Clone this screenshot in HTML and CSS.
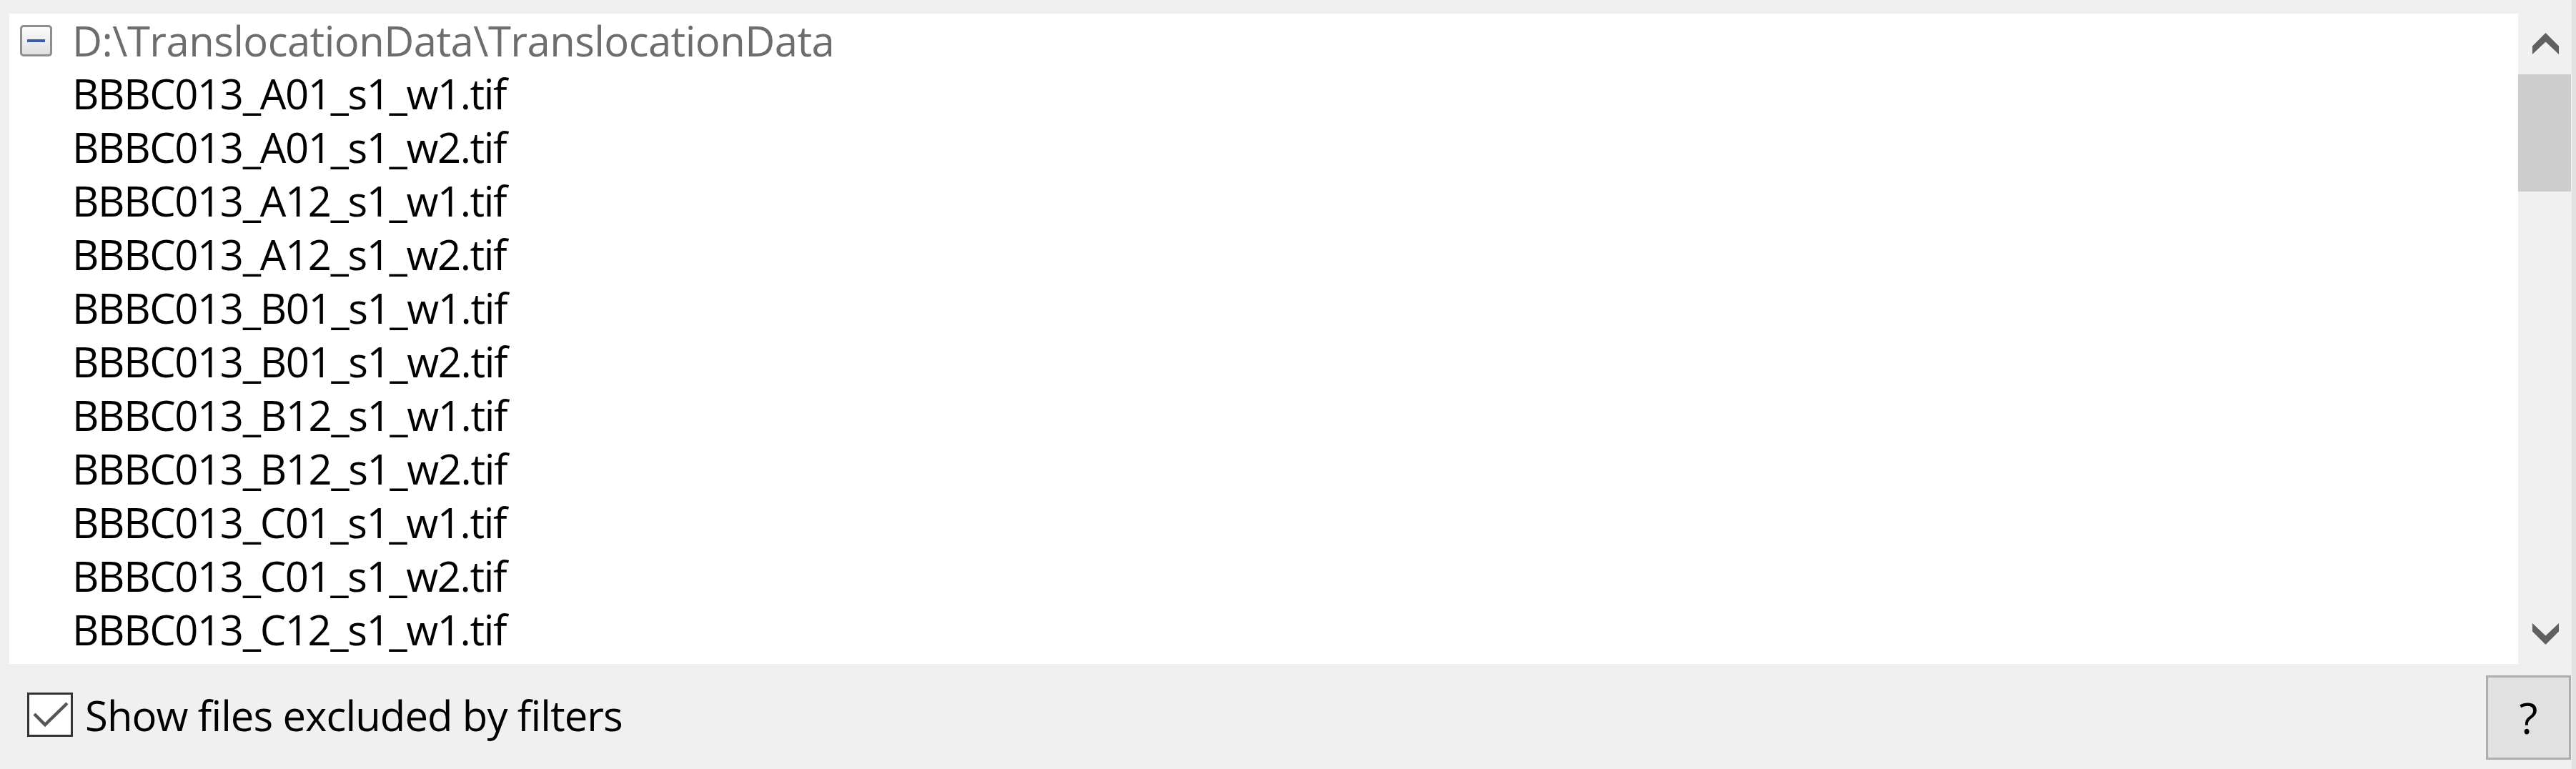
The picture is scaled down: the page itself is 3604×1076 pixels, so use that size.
FILE: index.html
```html
<!DOCTYPE html>
<html lang="en">
<head>
<meta charset="utf-8">
<title>Files</title>
<link rel="stylesheet" href="styles.css">
</head>
<body>
<div class="window">
  <div class="tree-panel">
    <div class="tree">
      <div class="tree-root">
        <span class="expander"><span class="minus"></span></span>
        <span class="root-label">D:\TranslocationData\TranslocationData</span>
      </div>
      <ul class="files">
        <li>BBBC013_A01_s1_w1.tif</li>
        <li>BBBC013_A01_s1_w2.tif</li>
        <li>BBBC013_A12_s1_w1.tif</li>
        <li>BBBC013_A12_s1_w2.tif</li>
        <li>BBBC013_B01_s1_w1.tif</li>
        <li>BBBC013_B01_s1_w2.tif</li>
        <li>BBBC013_B12_s1_w1.tif</li>
        <li>BBBC013_B12_s1_w2.tif</li>
        <li>BBBC013_C01_s1_w1.tif</li>
        <li>BBBC013_C01_s1_w2.tif</li>
        <li>BBBC013_C12_s1_w1.tif</li>
      </ul>
    </div>
    <div class="scrollbar">
      <div class="sb-btn">
        <svg class="sb-arrow" viewBox="0 0 37 31" width="37" height="31"><polygon points="18.5,0 37,18.5 37,30 18.5,12.5 0,30 0,18.5"/></svg>
      </div>
      <div class="sb-track"><div class="sb-thumb"></div></div>
      <div class="sb-btn">
        <svg class="sb-arrow" viewBox="0 0 37 31" width="37" height="31"><polygon points="0,1 18.5,18.5 37,1 37,12.5 18.5,31 0,12.5"/></svg>
      </div>
    </div>
  </div>
  <div class="footer">
    <label class="check">
      <span class="check-box">
        <svg viewBox="0 0 58 56" width="58" height="56"><polyline points="7,27 22,42 53,12"/></svg>
      </span>
      <span class="check-label">Show files excluded by filters</span>
    </label>
    <button class="help" type="button">?</button>
  </div>
</div>
</body>
</html>
```
FILE: styles.css
```css
html, body {
  margin: 0;
  padding: 0;
}
body {
  background: #f0f0f0;
  width: 3604px;
  height: 1076px;
  overflow: hidden;
  font-family: "Open Sans", "Noto Sans", sans-serif;
  font-size: 58px;
  color: #000;
}
.window {
  box-sizing: border-box;
  width: 3604px;
  height: 1076px;
  padding: 19px 0 0 13px;
  border-right: 6px solid #e2e2e2;
  display: flex;
  flex-direction: column;
}
.tree-panel {
  height: 910px;
  display: flex;
  flex: none;
}
.tree {
  flex: 1;
  background: #fff;
  padding-top: 1px;
}
.tree-root {
  height: 73px;
  line-height: 73px;
  display: flex;
  align-items: center;
  padding-left: 15px;
}
.expander {
  box-sizing: border-box;
  width: 45px;
  height: 44px;
  border: 3px solid #8e8e8e;
  border-radius: 5px;
  background: linear-gradient(#fbfbfb, #e0e0e0);
  display: flex;
  align-items: center;
  justify-content: center;
  flex: none;
}
.minus {
  width: 25px;
  height: 4px;
  background: #3d5ba6;
}
.root-label {
  margin-left: 28px;
  color: #6d6d6d;
  letter-spacing: -0.55px;
  white-space: nowrap;
}
.files {
  list-style: none;
  margin: 0;
  padding: 0 0 0 88px;
}
.files li {
  height: 75px;
  line-height: 75px;
  letter-spacing: -1.4px;
  white-space: nowrap;
}
.scrollbar {
  width: 75px;
  display: flex;
  flex-direction: column;
  background: #f0f0f0;
}
.sb-btn {
  height: 85px;
  display: flex;
  align-items: center;
  justify-content: center;
  flex: none;
}
.sb-arrow {
  fill: #606060;
  margin-left: 1px;
}
.sb-track {
  flex: 1;
}
.sb-thumb {
  width: 74px;
  height: 164px;
  background: #cdcdcd;
}
.footer {
  flex: 1;
  display: flex;
  align-items: center;
  justify-content: space-between;
  padding-left: 25px;
}
.check {
  display: flex;
  align-items: center;
  margin-top: -5px;
}
.check-box {
  box-sizing: border-box;
  width: 64px;
  height: 62px;
  border: 3px solid #333;
  background: #fff;
  display: flex;
  flex: none;
}
.check-box polyline {
  fill: none;
  stroke: #555;
  stroke-width: 4.5;
}
.check-label {
  margin-left: 17px;
  letter-spacing: -0.9px;
  white-space: nowrap;
  line-height: 75px;
}
.help {
  box-sizing: border-box;
  width: 119px;
  height: 118px;
  margin: 3px 1px 0 0;
  border: 3px solid #adadad;
  background: #e1e1e1;
  font-family: "Open Sans", "Noto Sans", sans-serif;
  font-size: 60px;
  color: #000;
  padding: 0;
  line-height: 1;
}
```
